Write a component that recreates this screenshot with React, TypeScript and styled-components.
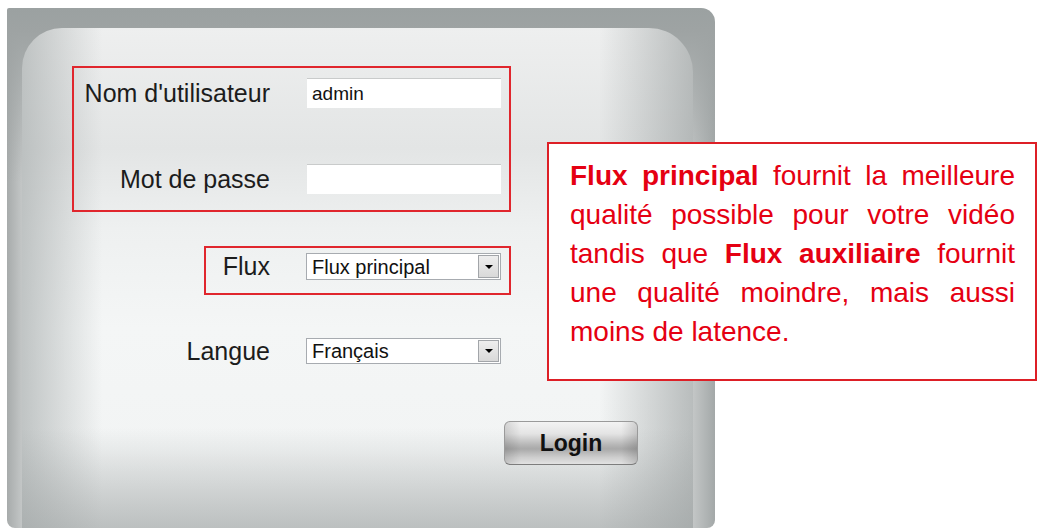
import React from "react";
import styled, { createGlobalStyle } from "styled-components";

const GlobalStyle = createGlobalStyle`
  html, body {
    margin: 0;
    padding: 0;
    background: #ffffff;
  }
  body {
    font-family: "Liberation Sans", Arial, Helvetica, sans-serif;
    overflow: hidden;
  }
`;

const Page = styled.div`
  position: relative;
  width: 1046px;
  height: 528px;
  padding: 8px 0 0 7px;
  box-sizing: border-box;
`;

const Frame = styled.div`
  width: 708px;
  height: 520px;
  box-sizing: border-box;
  padding: 20px 22px 0 15px;
  border-radius: 2px 14px 8px 8px;
  background:
    linear-gradient(to bottom, #9ba1a1 0px, #9ea3a3 22px, rgba(158, 163, 163, 0) 175px),
    linear-gradient(to right, #a7abab 0px, #c3c6c6 15px, #c3c6c6 calc(100% - 22px), #a3a8a8 100%),
    #b5b9b9;
`;

const Panel = styled.div`
  height: 500px;
  box-sizing: border-box;
  padding: 38px 0 0 50px;
  border-radius: 40px 44px 0 0;
  background:
    linear-gradient(to bottom, rgba(255, 255, 255, 0) 80%, rgba(160, 165, 165, 0.6) 100%),
    linear-gradient(to right, rgba(175, 180, 180, 0.75) 0%, rgba(255, 255, 255, 0) 12%, rgba(255, 255, 255, 0) 86%, rgba(160, 165, 165, 0.7) 100%),
    linear-gradient(to bottom, #eeefef 0%, #e3e5e5 24%, #eef0f0 40%, #f4f6f6 60%, #f2f4f4 85%, #e6e8e8 100%);
`;

const Form = styled.form`
  width: 566px;
  display: flex;
  flex-direction: column;
  align-items: flex-start;
  margin: 0;
`;

const Fields = styled.div`
  width: 439px;
  display: flex;
  flex-direction: column;
  align-items: flex-end;
`;

const Highlight = styled.div<{ $width: number; $pad: string; $gap?: number; $top?: number }>`
  width: ${(p) => p.$width}px;
  box-sizing: border-box;
  border: 2px solid #e0262d;
  padding: ${(p) => p.$pad};
  margin-top: ${(p) => p.$top ?? 0}px;
  display: flex;
  flex-direction: column;
  gap: ${(p) => p.$gap ?? 0}px;
`;

const Row = styled.div<{ $gap: number; $top?: number; $right?: number }>`
  display: flex;
  align-items: center;
  justify-content: flex-end;
  gap: ${(p) => p.$gap}px;
  margin-top: ${(p) => p.$top ?? 0}px;
  margin-right: ${(p) => p.$right ?? 0}px;
`;

const Label = styled.label`
  font-size: 25px;
  line-height: 1;
  color: #1c1c1c;
  white-space: nowrap;
`;

const TextInput = styled.input`
  width: 194px;
  height: 30px;
  box-sizing: border-box;
  border: none;
  border-top: 1px solid #c9cbcb;
  background: #ffffff;
  padding: 0 5px;
  font-family: "Liberation Sans", Arial, sans-serif;
  font-size: 19px;
  color: #111111;
  outline: none;
`;

const SelectBox = styled.div<{ $height: number }>`
  width: 195px;
  height: ${(p) => p.$height}px;
  box-sizing: border-box;
  border: 1px solid #a7abb0;
  background: #ffffff;
  display: flex;
  align-items: center;
  justify-content: space-between;
  padding: 1px 1px 1px 5px;
`;

const SelectText = styled.span`
  font-size: 20px;
  line-height: 1;
  color: #111111;
  white-space: nowrap;
`;

const ArrowButton = styled.span`
  width: 21px;
  align-self: stretch;
  box-sizing: border-box;
  border: 1px solid #a2a5a9;
  background: linear-gradient(to bottom, #eeeeee 0%, #d9d9d9 100%);
  display: flex;
  align-items: center;
  justify-content: center;
`;

const Triangle = styled.span`
  width: 0;
  height: 0;
  border-left: 4px solid transparent;
  border-right: 4px solid transparent;
  border-top: 4px solid #000000;
`;

const LoginButton = styled.button`
  align-self: flex-end;
  margin-top: 57px;
  width: 134px;
  height: 44px;
  box-sizing: border-box;
  border: 1px solid #9a9a9a;
  border-bottom-color: #7d7d7d;
  border-radius: 6px;
  background:
    linear-gradient(to right, rgba(0, 0, 0, 0.12) 0%, rgba(0, 0, 0, 0) 12%, rgba(0, 0, 0, 0) 88%, rgba(0, 0, 0, 0.14) 100%),
    linear-gradient(to bottom, #f3f3f3 0%, #e4e4e4 28%, #b5b5b5 55%, #a9a9a9 64%, #cdcdcd 84%, #e2e2e2 100%);
  font-family: "Liberation Sans", Arial, sans-serif;
  font-weight: bold;
  font-size: 23px;
  color: #111111;
  padding: 0;
  cursor: pointer;
`;

const Callout = styled.div`
  position: absolute;
  left: 547px;
  top: 142px;
  width: 490px;
  height: 239px;
  box-sizing: border-box;
  border: 2px solid #dd1f26;
  background: #ffffff;
  padding: 12px 20px 0 21px;
  font-size: 28px;
  line-height: 39px;
  color: #e50012;
  text-align: justify;
`;

const Strong = styled.b`
  font-weight: bold;
`;

function Select({ value, height }: { value: string; height: number }) {
  return (
    <SelectBox $height={height}>
      <SelectText>{value}</SelectText>
      <ArrowButton>
        <Triangle />
      </ArrowButton>
    </SelectBox>
  );
}

export default function App() {
  return (
    <>
      <GlobalStyle />
      <Page>
        <Frame>
          <Panel>
            <Form onSubmit={(e) => e.preventDefault()}>
              <Fields>
                <Highlight $width={439} $pad="10px 8px 16px 8px" $gap={56}>
                  <Row $gap={37}>
                    <Label>Nom d'utilisateur</Label>
                    <TextInput defaultValue="admin" />
                  </Row>
                  <Row $gap={37}>
                    <Label>Mot de passe</Label>
                    <TextInput type="password" />
                  </Row>
                </Highlight>
                <Highlight $width={307} $pad="5px 8px 13px 8px" $top={34}>
                  <Row $gap={36}>
                    <Label>Flux</Label>
                    <Select value="Flux principal" height={27} />
                  </Row>
                </Highlight>
                <Row $gap={36} $top={43} $right={10}>
                  <Label>Langue</Label>
                  <Select value="Français" height={26} />
                </Row>
              </Fields>
              <LoginButton type="submit">Login</LoginButton>
            </Form>
          </Panel>
        </Frame>
        <Callout>
          <Strong>Flux principal</Strong> fournit la meilleure qualité possible pour votre vidéo
          tandis que <Strong>Flux auxiliaire</Strong> fournit une qualité moindre, mais aussi
          moins de latence.
        </Callout>
      </Page>
    </>
  );
}
